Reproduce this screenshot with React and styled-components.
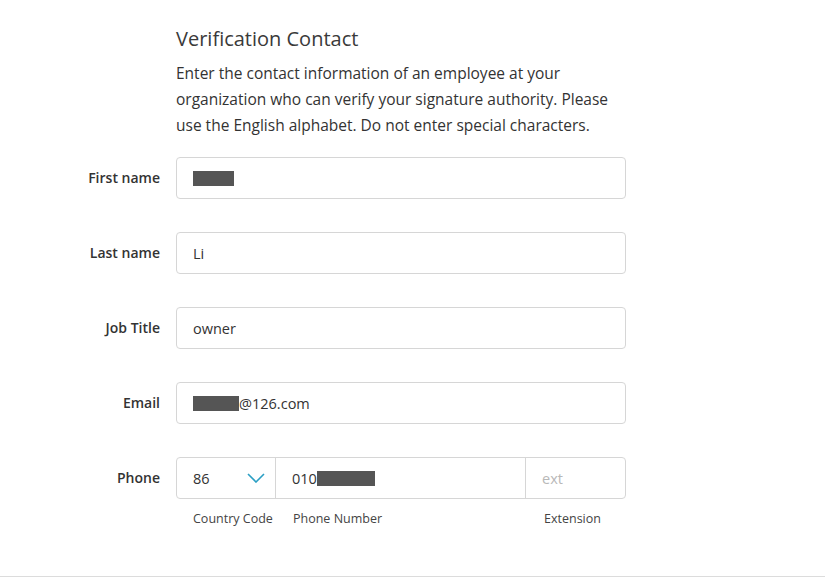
import React from 'react';
import styled, { createGlobalStyle } from 'styled-components';

const GlobalStyle = createGlobalStyle`
body {
  margin: 0;
  background: #fff;
  font-family: "Open Sans", "Liberation Sans", sans-serif;
  color: #333;
}
`;

const Page = styled.div`
width: 825px;
height: 577px;
box-sizing: border-box;
border-bottom: 1px solid #dcdcdc;
padding-top: 26px;
`;
const Header = styled.div`
margin-left: 176px;
width: 460px;
`;
const Title = styled.div`
font-size: 20px;
line-height: 26px;
color: #3a3a3a;
margin-bottom: 8px;
`;
const Intro = styled.div`
font-size: 15.5px;
line-height: 26px;
color: #333;
`;
const Form = styled.div`
display: flex;
flex-direction: column;
gap: 33px;
margin-top: 19px;
`;
const Row = styled.div`
display: flex;
align-items: flex-start;
`;
const Label = styled.div`
width: 176px;
padding-right: 16px;
box-sizing: border-box;
text-align: right;
font-size: 14px;
font-weight: 600;
line-height: 42px;
color: #333;
`;
const Field = styled.div`
width: 450px;
height: 42px;
box-sizing: border-box;
border: 1px solid #d6d6d6;
border-radius: 4px;
display: flex;
align-items: center;
padding-left: 16px;
font-size: 14.5px;
color: #333;
`;
const Redacted = styled.span`
display: inline-block;
width: ${p => p.w}px;
height: 15px;
background: #555;
`;
const PhoneGroup = styled.div`
display: flex;
flex-direction: column;
`;
const PhoneBox = styled.div`
width: 450px;
height: 42px;
box-sizing: border-box;
border: 1px solid #d6d6d6;
border-radius: 4px;
display: flex;
`;
const Cell = styled.div`
width: ${p => p.w}px;
flex: ${p => (p.w ? 'none' : '1')};
box-sizing: border-box;
display: flex;
align-items: center;
justify-content: ${p => (p.spread ? 'space-between' : 'flex-start')};
padding: 0 ${p => (p.spread ? 10 : 16)}px 0 16px;
font-size: 14.5px;
color: ${p => (p.muted ? '#b8b8b8' : '#333')};
border-left: ${p => (p.first ? 'none' : '1px solid #d6d6d6')};
`;
const Hints = styled.div`
display: flex;
margin-top: 11px;
font-size: 12.5px;
color: #444;
`;
const Hint = styled.div`
width: ${p => p.w}px;
padding-left: ${p => p.pl}px;
box-sizing: border-box;
`;

const Chevron = () => (
  <svg width="18" height="10" viewBox="0 0 18 10">
    <path d="M1 1 L9 9 L17 1" fill="none" stroke="#2b9fc4" strokeWidth="1.6" />
  </svg>
);

const App = () => (
  <Page>
    <GlobalStyle />
    <Header>
      <Title>Verification Contact</Title>
      <Intro>
        Enter the contact information of an employee at your organization who can verify your
        signature authority. Please use the English alphabet. Do not enter special characters.
      </Intro>
    </Header>
    <Form>
      <Row>
        <Label>First name</Label>
        <Field><Redacted w={41} /></Field>
      </Row>
      <Row>
        <Label>Last name</Label>
        <Field>Li</Field>
      </Row>
      <Row>
        <Label>Job Title</Label>
        <Field>owner</Field>
      </Row>
      <Row>
        <Label>Email</Label>
        <Field><Redacted w={46} />@126.com</Field>
      </Row>
      <Row>
        <Label>Phone</Label>
        <PhoneGroup>
          <PhoneBox>
            <Cell first spread w={98}>86<Chevron /></Cell>
            <Cell w={250}>010<Redacted w={58} /></Cell>
            <Cell muted>ext</Cell>
          </PhoneBox>
          <Hints>
            <Hint w={100} pl={17}>Country Code</Hint>
            <Hint w={250} pl={17}>Phone Number</Hint>
            <Hint w={100} pl={18}>Extension</Hint>
          </Hints>
        </PhoneGroup>
      </Row>
    </Form>
  </Page>
);

export default App;
